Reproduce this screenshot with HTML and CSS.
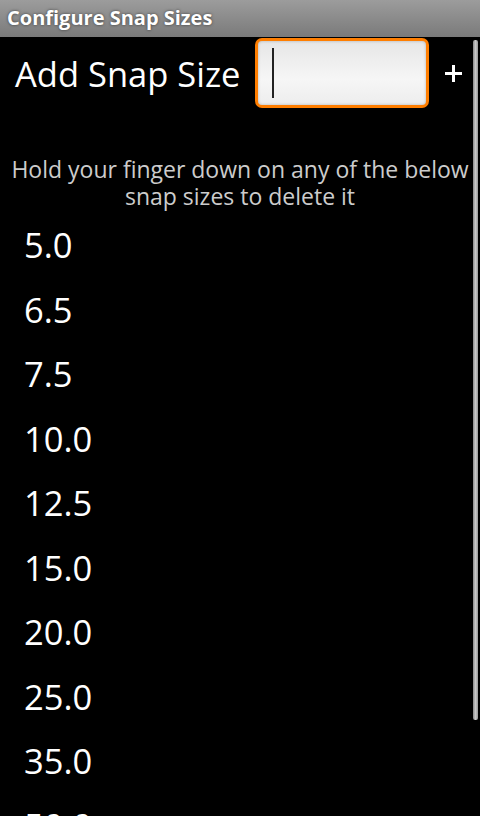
FILE: index.html
```html
<!DOCTYPE html>
<html>
<head>
<meta charset="utf-8">
<link rel="stylesheet" href="styles.css">
</head>
<body>
<div class="titlebar">Configure Snap Sizes</div>
<div class="content">
  <div class="addrow">
    <div class="addlabel">Add Snap Size</div>
    <div class="textbox"><span class="cursor"></span></div>
    <div class="plus"><span class="plus-h"></span><span class="plus-v"></span></div>
  </div>
  <div class="hint">Hold your finger down on any of the below snap sizes to delete it</div>
  <ul class="list">
    <li>5.0</li>
    <li>6.5</li>
    <li>7.5</li>
    <li>10.0</li>
    <li>12.5</li>
    <li>15.0</li>
    <li>20.0</li>
    <li>25.0</li>
    <li>35.0</li>
    <li>50.0</li>
  </ul>
  <div class="scrollbar"></div>
</div>
</body>
</html>
```
FILE: styles.css
```css
html, body {
  margin: 0;
  padding: 0;
  background: #000;
  height: 816px;
  overflow: hidden;
  font-family: "Open Sans", "DejaVu Sans", sans-serif;
}
.titlebar {
  height: 37px;
  box-sizing: border-box;
  background: linear-gradient(#9c9c9c, #7a7a7a);
  color: #fff;
  font-weight: bold;
  font-size: 20px;
  line-height: 36px;
  padding-left: 7px;
  text-shadow: 0 0 3px rgba(0,0,0,0.6);
}
.content {
  position: relative;
  height: 779px;
  overflow: hidden;
}
.addrow {
  display: flex;
  align-items: center;
  height: 72px;
  padding-left: 15px;
}
.addlabel {
  color: #fff;
  font-size: 34.5px;
  width: 240px;
}
.textbox {
  width: 154px;
  height: 64px;
  border: 3px solid #ff7e00;
  border-radius: 7px;
  background: linear-gradient(#e6e6e6, #f6f6f6 60%, #ededed);
  box-shadow: inset 0 0 3px rgba(0,0,0,0.25);
  display: flex;
  align-items: center;
  padding-left: 14px;
  margin-top: -1px;
}
.cursor {
  width: 2px;
  height: 50px;
  background: #222;
}
.plus {
  position: relative;
  width: 17px;
  height: 17px;
  margin-left: 16px;
  margin-top: 1px;
}
.plus-h, .plus-v {
  position: absolute;
  background: #fff;
}
.plus-h {
  left: 0;
  top: 7px;
  width: 17px;
  height: 3px;
}
.plus-v {
  left: 7px;
  top: 0;
  width: 3px;
  height: 17px;
}
.hint {
  color: #cccccc;
  font-size: 23px;
  line-height: 27px;
  text-align: center;
  margin-top: 47px;
  padding: 0 2px;
}
.list {
  list-style: none;
  margin: 3px 0 0 0;
  padding: 0;
}
.list li {
  color: #fff;
  font-size: 34.5px;
  height: 64.5px;
  line-height: 64.5px;
  padding-left: 24px;
}
.scrollbar {
  position: absolute;
  right: 2px;
  top: 3px;
  width: 5px;
  height: 680px;
  border-radius: 2px;
  background: linear-gradient(90deg, #888, #c8c8c8 50%, #999);
}
```
